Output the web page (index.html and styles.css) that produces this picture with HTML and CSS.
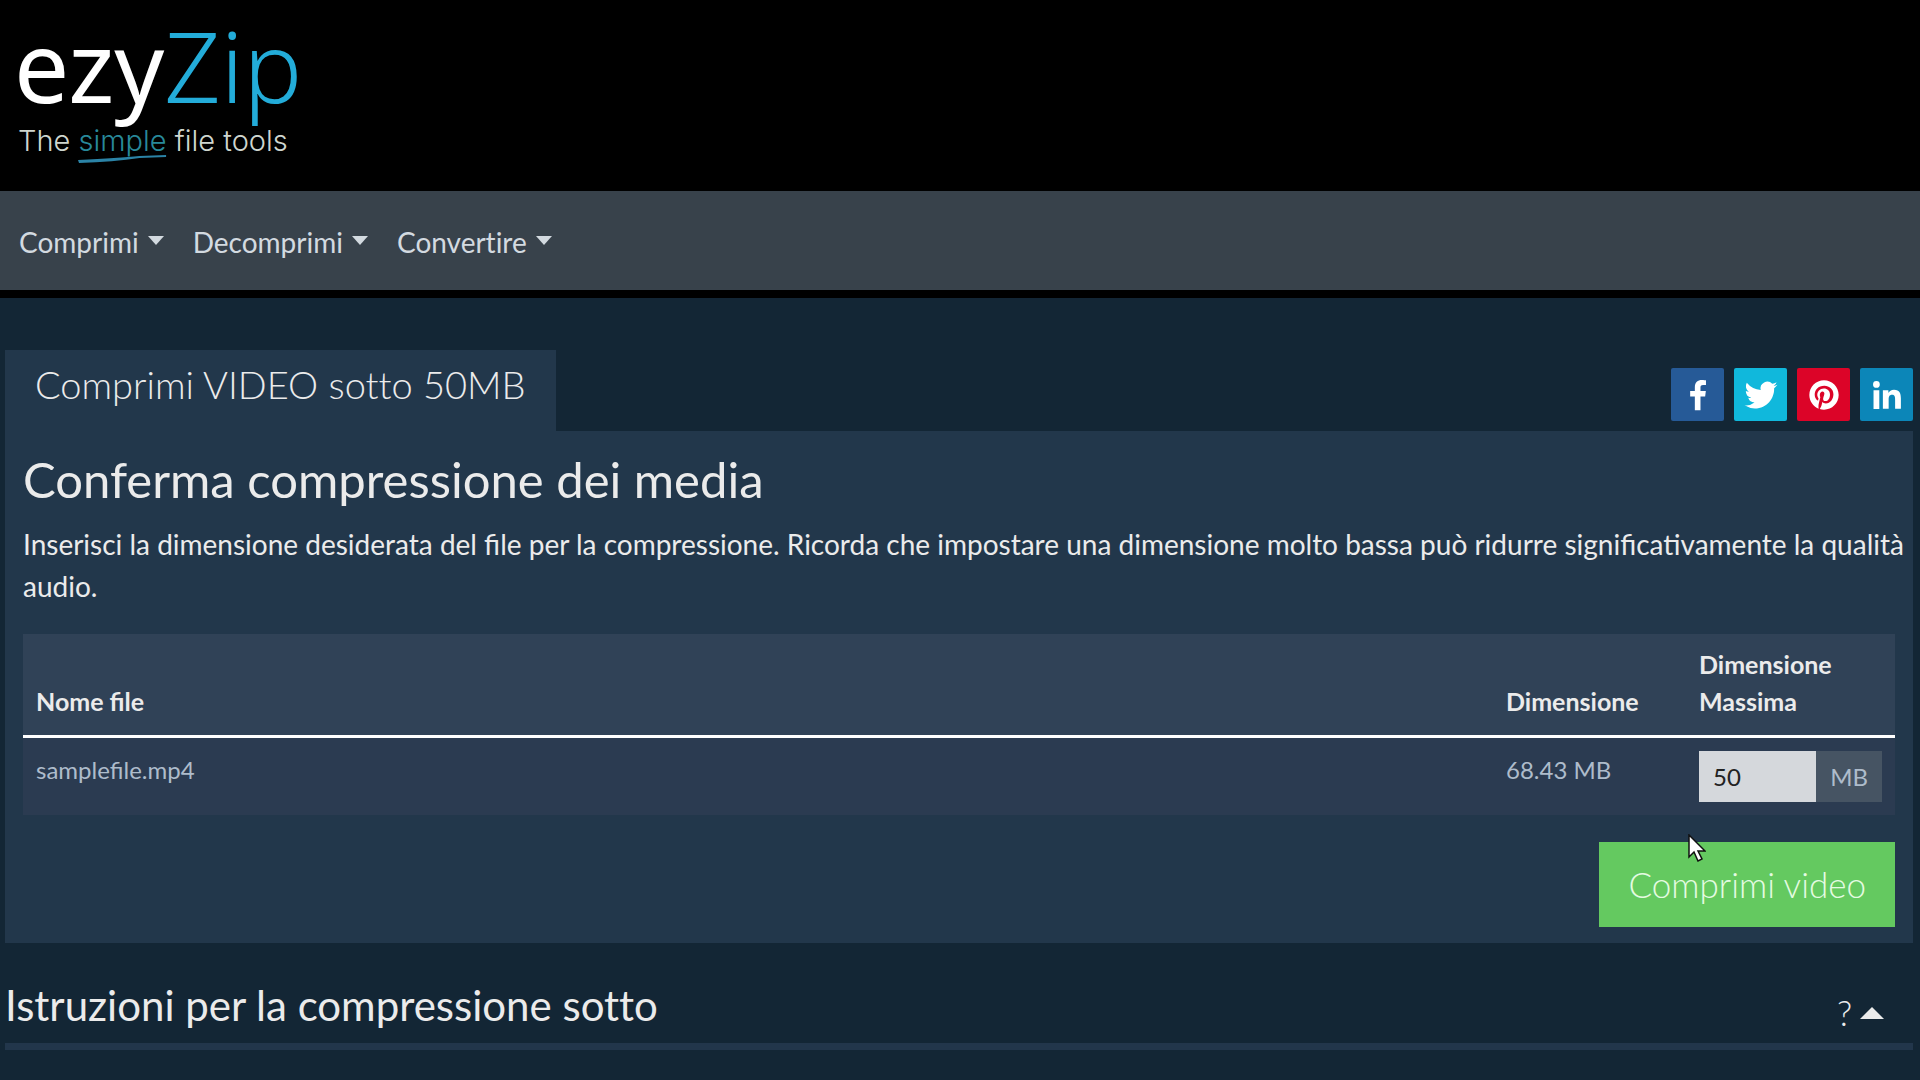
FILE: index.html
```html
<!DOCTYPE html>
<html lang="it">

<head>
    <meta charset="UTF-8">
    <title>ezyZip - Comprimi VIDEO sotto 50MB</title>
    <link rel="stylesheet" href="styles.css">
</head>

<body>

    <header class="header">
        <a href="#" class="logo">
            <span class="logo-name">ezy<span class="logo-zip">Zip</span></span>
            <span class="logo-tag">The <span class="logo-simple">simple<svg class="swoosh" viewBox="0 0 86 10" preserveAspectRatio="none"><path d="M0 6 Q40 4 60 2 L86 1 L86 3 L60 4 Q35 8 1 9 Z" fill="#2b83a6"/></svg></span> file tools</span>
        </a>
    </header>

    <nav class="navbar">
        <a href="#" class="nav-link">Comprimi</a>
        <a href="#" class="nav-link">Decomprimi</a>
        <a href="#" class="nav-link">Convertire</a>
    </nav>

    <main class="container">
        <div class="top">
            <h1 class="tab">Comprimi VIDEO sotto 50MB</h1>
            <div class="share">
                <a href="#" class="share-btn facebook" aria-label="Facebook">
                    <svg viewBox="0 0 32 32"><path d="M17.8 27V17h3.4l.5-3.900h-3.900v-2.500c0-1.100.3-1.900 1.900-1.900h2.100V5.200c-.4 0-1.600-.2-3-.2-3 0-5.100 1.800-5.100 5.200v2.900h-3.400V17h3.400v10z"/></svg>
                </a>
                <a href="#" class="share-btn twitter" aria-label="Twitter">
                    <svg viewBox="0 0 32 32"><path d="M28 8.600a9.900 9.900 0 0 1-2.830.78 4.940 4.940 0 0 0 2.170-2.730 9.900 9.900 0 0 1-3.130 1.200 4.920 4.920 0 0 0-8.390 4.490A13.980 13.980 0 0 1 5.670 7.150a4.930 4.930 0 0 0 1.520 6.570 4.900 4.900 0 0 1-2.230-.61v.06a4.930 4.930 0 0 0 3.950 4.830 4.900 4.900 0 0 1-2.220.08 4.930 4.930 0 0 0 4.600 3.420A9.900 9.900 0 0 1 4 23.540a13.940 13.940 0 0 0 7.550 2.210c9.050 0 14-7.500 14-14v-.64A10 10 0 0 0 28 8.600z"/></svg>
                </a>
                <a href="#" class="share-btn pinterest" aria-label="Pinterest">
                    <svg viewBox="-2 -2 36 36"><path d="M16 4C9.400 4 4 9.400 4 16c0 5.100 3.200 9.400 7.600 11.200-.1-.9-.2-2.400 0-3.400.2-.9 1.400-6 1.400-6s-.4-.7-.4-1.800c0-1.700 1-2.900 2.200-2.900 1 0 1.500.8 1.500 1.700 0 1-.7 2.600-1 4-.3 1.200.6 2.200 1.800 2.200 2.100 0 3.800-2.200 3.800-5.500 0-2.900-2.100-4.900-5-4.900-3.400 0-5.400 2.600-5.400 5.200 0 1 .4 2.100.9 2.700.1.1.1.2.1.3l-.3 1.400c0 .2-.2.3-.4.2-1.500-.7-2.400-2.900-2.400-4.600 0-3.800 2.800-7.300 7.900-7.300 4.200 0 7.400 3 7.400 6.900 0 4.100-2.600 7.500-6.200 7.500-1.200 0-2.400-.6-2.800-1.400l-.7 2.900c-.3 1-1 2.300-1.500 3.100 1.100.3 2.300.5 3.500.5 6.600 0 12-5.400 12-12S22.600 4 16 4z"/></svg>
                </a>
                <a href="#" class="share-btn linkedin" aria-label="LinkedIn">
                    <svg viewBox="0 0 32 32"><path d="M6.200 12.600h4.200v13.500H6.200zM8.300 5.900a2.400 2.400 0 1 1 0 4.900 2.400 2.400 0 0 1 0-4.900M13 12.600h4v1.800h.1c.6-1.100 1.900-2.200 4-2.200 4.200 0 5 2.800 5 6.400v7.400h-4.200v-6.600c0-1.600 0-3.600-2.200-3.600s-2.500 1.700-2.500 3.500v6.700H13z"/></svg>
                </a>
            </div>
        </div>

        <form class="panel">
            <div class="panel-intro">
                <h2 class="panel-title">Conferma compressione dei media</h2>
                <p>Inserisci la dimensione desiderata del file per la compressione. Ricorda che impostare una dimensione molto bassa può ridurre significativamente la qualità audio.</p>
            </div>

            <div class="panel-body">
                <table class="files">
                    <thead>
                        <tr>
                            <th class="col-name">Nome file</th>
                            <th class="col-size">Dimensione</th>
                            <th class="col-max"><label for="max">Dimensione Massima</label></th>
                        </tr>
                    </thead>
                    <tbody>
                        <tr>
                            <td>samplefile.mp4</td>
                            <td>68.43 MB</td>
                            <td>
                                <div class="input-group">
                                    <input type="text" id="max" class="input" value="50">
                                    <span class="input-unit">MB</span>
                                </div>
                            </td>
                        </tr>
                    </tbody>
                </table>

                <div class="actions">
                    <button type="button" class="btn">Comprimi video</button>
                    <svg class="cursor" viewBox="0 0 18 28"><path d="M1 1v22l5-5 4 9 4-2-4-8h7z" fill="#fff" stroke="#111" stroke-width="1.500"/></svg>
                </div>
            </div>
        </form>

        <div class="help">
            <h2 class="help-title">Istruzioni per la compressione sotto</h2>
            <a href="#" class="help-toggle">?</a>
        </div>
    </main>

</body>

</html>
```

FILE: styles.css
```css
* {
  box-sizing: border-box;
}

body {
  margin: 0;
  background: #132635;
  color: #ebebeb;
  font-family: Lato, sans-serif;
  font-size: 28px;
  line-height: 42px;
}

h1, h2, p {
  margin: 0;
  font-weight: 400;
}

h1, h2, nav {
  font-variant-ligatures: none;
}

a {
  color: inherit;
  text-decoration: none;
}

.header {
  background: #000;
  padding: 14px 14px 26px;
}

.logo {
  display: block;
  color: #fff;
  font-family: "Noto Sans", sans-serif;
}

.logo-name {
  display: block;
  font-size: 98px;
  line-height: 102px;
}

.logo-zip {
  color: #23acd9;
  font-weight: 300;
}

.logo-tag {
  display: block;
  padding-left: 4px;
  color: #cfd6cf;
  font-family: Inter, sans-serif;
  font-size: 29px;
  font-weight: 300;
  line-height: 49px;
}

.logo-simple {
  position: relative;
  color: #28899a;
}

.swoosh {
  position: absolute;
  left: 0;
  bottom: -6px;
  width: 100%;
  height: 10px;
}

.navbar {
  display: flex;
  gap: 29px;
  padding: 30px 19px 27px;
  background: #38424b;
  border-bottom: 8px solid #000;
  color: #d3dae0;
}

.nav-link::after {
  content: "";
  display: inline-block;
  margin-left: 9px;
  vertical-align: 8px;
  border: 8px solid transparent;
  border-top: 9px solid;
  border-bottom: 0;
}

.container {
  padding: 52px 7px 0 5px;
}

.top {
  display: flex;
  justify-content: space-between;
  align-items: flex-end;
}

.tab {
  padding: 12px 30px 24px;
  background: #22374b;
  font-size: 38px;
  font-weight: 300;
  line-height: 45px;
}

.share {
  display: flex;
  gap: 10px;
  padding-bottom: 10px;
}

.share-btn {
  display: flex;
  align-items: center;
  justify-content: center;
  width: 53px;
  height: 53px;
  border-radius: 2px;
  fill: #fff;
}

.share-btn svg {
  width: 44px;
  height: 44px;
}

.facebook {
  background: #265a97;
}

.twitter {
  background: #10b8dc;
}

.pinterest {
  background: #dc0428;
}

.linkedin {
  background: #0c86b8;
}

.panel {
  background: #22374b;
}

.panel-intro {
  padding: 18px 4px 0 18px;
}

.panel-title {
  margin-bottom: 14px;
  font-size: 49px;
  line-height: 60px;
}

.panel-body {
  padding: 27px 18px 16px;
}

.files {
  width: 100%;
  margin-bottom: 27px;
  border-collapse: collapse;
  table-layout: fixed;
  font-size: 24px;
  line-height: 37px;
  text-align: left;
}

.files th {
  padding: 12px 13px 15px;
  background: #304257;
  border-bottom: 3px solid #fff;
  font-size: 25px;
  font-weight: 700;
  vertical-align: bottom;
}

.files td {
  padding: 13px;
  background: #2b3b51;
  color: #aebccb;
  vertical-align: top;
}

.files .col-size {
  width: 193px;
}

.files .col-max {
  width: 209px;
}

.input-group {
  display: flex;
}

.input {
  flex: 1;
  min-width: 0;
  height: 51px;
  padding: 0 14px;
  border: 0;
  background: #d5d8dc;
  color: #222;
  font: inherit;
}

.input-unit {
  padding: 0 14px;
  background: #465463;
  line-height: 51px;
}

.actions {
  display: flex;
  justify-content: flex-end;
  position: relative;
}

.btn {
  padding: 20px 29px;
  border: 0;
  background: #64c960;
  color: #e4fbe2;
  font-family: inherit;
  font-size: 35px;
  font-weight: 300;
  line-height: 45px;
}

.cursor {
  position: absolute;
  top: -8px;
  right: 189px;
  width: 18px;
  height: 28px;
}

.help {
  display: flex;
  justify-content: space-between;
  align-items: center;
  padding: 32px 29px 8px 0;
  border-bottom: 7px solid #22364b;
}

.help-title {
  font-size: 42px;
  line-height: 60px;
}

.help-toggle {
  padding-top: 14px;
  font-size: 35px;
  font-weight: 300;
}

.help-toggle::after {
  content: "";
  display: inline-block;
  margin-left: 8px;
  vertical-align: 7px;
  border: 12px solid transparent;
  border-bottom: 12px solid;
  border-top: 0;
}
```
